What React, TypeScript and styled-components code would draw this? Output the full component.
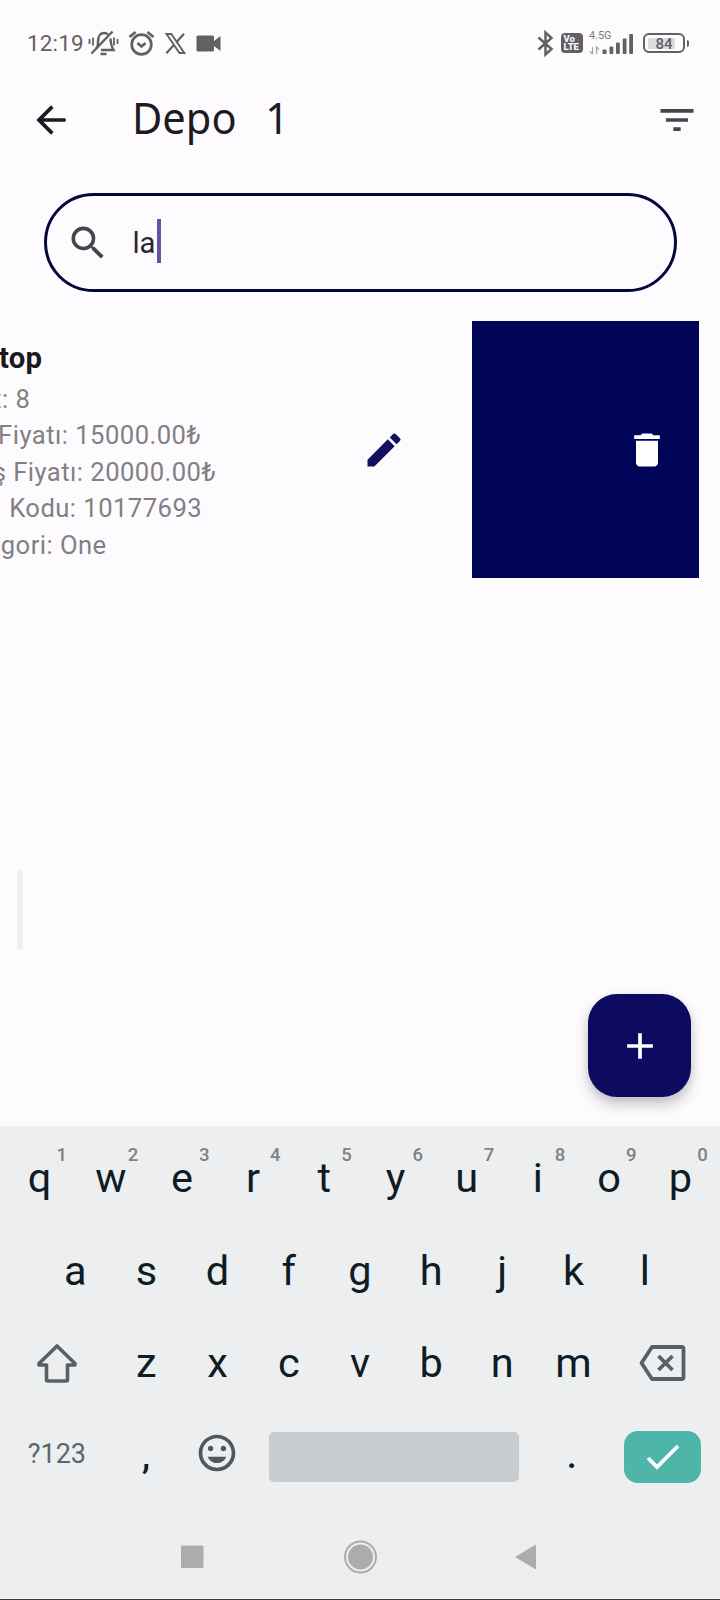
import React from "react";
import styled, { createGlobalStyle } from "styled-components";
import {
  MdAdd,
  MdArrowBack,
  MdDelete,
  MdEdit,
  MdFilterList,
  MdInsertEmoticon,
  MdSearch,
} from "react-icons/md";

const GlobalStyle = createGlobalStyle`
  * { box-sizing: border-box; }
  body {
    margin: 0;
    background: #fefbff;
    font-family: Roboto, "Liberation Sans", sans-serif;
  }
  svg { display: block; flex: none; }
`;

const Screen = styled.div`
  width: 720px;
  height: 1600px;
  display: flex;
  flex-direction: column;
  overflow: hidden;
  background: #fefbff;
`;

/* Status bar */

const StatusBar = styled.header`
  height: 86px;
  padding: 0 31px 0 27px;
  display: flex;
  align-items: center;
  justify-content: space-between;
  color: #636064;
`;

const StatusGroup = styled.div`
  display: flex;
  align-items: center;
`;

const Clock = styled.span`
  width: 61px;
  font-size: 22.4px;
  line-height: 30px;
  letter-spacing: 0.2px;
`;

const VolteBadge = styled.div`
  width: 22.5px;
  height: 20.5px;
  margin-left: 7px;
  border-radius: 4px;
  background: #636064;
  color: #fefbff;
  font-size: 9.5px;
  line-height: 8.5px;
  font-weight: 800;
  padding: 2px 0 0 3px;
`;

const Signal = styled.div`
  margin-left: 6px;
  width: 46px;
  height: 24px;
  display: grid;
  grid-template: 24px / 46px;
`;

const NetworkType = styled.span`
  grid-area: 1 / 1;
  font-size: 10.8px;
  line-height: 10px;
  color: #7b787c;
`;

const SignalBars = styled.svg`
  grid-area: 1 / 1;
`;

const Battery = styled.div`
  display: flex;
  align-items: center;
  margin-left: 8px;
`;

const BatteryCell = styled.div`
  width: 42px;
  height: 20px;
  border: 2.2px solid #636064;
  border-radius: 6px;
  padding: 2.5px;
  display: flex;
`;

const BatteryFill = styled.div`
  flex: 1;
  background: linear-gradient(90deg, #dedbdf 82%, transparent 82%);
  border-radius: 2px;
  font-size: 15px;
  font-weight: 500;
  line-height: 12px;
  text-align: center;
`;

const BatteryTip = styled.div`
  width: 2.5px;
  height: 7px;
  margin-left: 1.5px;
  background: #636064;
  border-radius: 0 2px 2px 0;
`;

/* App bar and search */

const AppBar = styled.div`
  height: 68px;
  padding: 0 21.5px 0 28.5px;
  display: flex;
  align-items: center;
  color: #1d1b1f;
`;

const Title = styled.h1`
  flex: 1;
  margin: -6px 0 0 59px;
  font: 400 44px/60px "Noto Sans", sans-serif;
  word-spacing: 19px;
  transform: scaleX(0.945);
  transform-origin: left center;
`;

const SearchField = styled.div`
  width: 633px;
  height: 99px;
  margin: 39px 0 0 44px;
  padding-left: 18.5px;
  display: flex;
  align-items: center;
  border: 3.6px solid #04063f;
  border-radius: 50px;
  color: #47454a;
`;

const Query = styled.span`
  margin-left: 23px;
  font-size: 29.3px;
  line-height: 44px;
  color: #2a282c;
`;

const Caret = styled.span`
  width: 3.6px;
  height: 44px;
  margin-left: 1.5px;
  margin-top: -3px;
  background: #6653a6;
`;

/* Swiped product row */

const ProductRow = styled.section`
  height: 257px;
  margin: 29px 21.5px 0 0;
  display: flex;
`;

const ProductTile = styled.div`
  flex: 1;
  min-width: 0;
  display: flex;
  align-items: center;
  justify-content: space-between;
  padding-right: 66px;
  color: #12105f;
`;

const ProductInfo = styled.div`
  margin-left: -53px;
  white-space: nowrap;
`;

const ProductName = styled.div`
  font-size: 29.3px;
  line-height: 44px;
  font-weight: 700;
  letter-spacing: 0.3px;
  padding-left: 3px;
  color: #1b191d;
`;

const ProductLine = styled.div`
  position: relative;
  top: 0.6px;
  font-size: 25.6px;
  line-height: 36.6px;
  letter-spacing: 0.46px;
  color: #828084;
`;

const Lead = styled.span`
  margin: 0 4px 0 -4px;
`;

const DeleteAction = styled.div`
  width: 226.5px;
  background: #000457;
  color: #fff;
  display: flex;
  align-items: center;
  justify-content: flex-end;
  padding-right: 29.5px;
`;

const Body = styled.main`
  flex: 1;
  display: flex;
  justify-content: space-between;
  align-items: flex-end;
  padding: 0 28.6px 28.6px 17px;
`;

const EdgeHandle = styled.div`
  width: 6px;
  height: 80px;
  margin-bottom: 147px;
  border-radius: 3px;
  background: #f1eef2;
`;

const Fab = styled.div`
  width: 103px;
  height: 103px;
  border-radius: 29px;
  background: #0d0b60;
  color: #fff;
  display: flex;
  align-items: center;
  justify-content: center;
  box-shadow: 0 8px 14px rgba(0, 0, 0, 0.2), 0 2px 8px rgba(0, 0, 0, 0.08);
`;

/* Keyboard */

const Keyboard = styled.div`
  height: 474px;
  padding-top: 6.4px;
  background: #eceef0;
  border-bottom: 1px solid #3a3c3e;
`;

const KeyRow = styled.div<{ $inset?: number }>`
  display: flex;
  height: 92.3px;
  padding: 0 ${(p) => 4 + (p.$inset ?? 0)}px;
`;

const Key = styled.div`
  position: relative;
  width: 71.2px;
  font-size: 41.5px;
  line-height: 92.3px;
  text-align: center;
  color: #0e1c24;
`;

const KeyHint = styled.span`
  position: absolute;
  left: 52.5px;
  top: 11.6px;
  font-size: 18.5px;
  line-height: 22px;
  font-weight: 500;
  color: #7d8285;
`;

const WideKey = styled.div`
  width: 106.8px;
  display: flex;
  align-items: center;
  justify-content: center;
  color: #566066;
`;

const BottomRow = styled.div`
  display: flex;
  align-items: center;
  height: 97px;
  padding: 0 18.7px 0 3.5px;
  color: #4d595f;
`;

const SymbolsKey = styled.div`
  width: 107px;
  text-align: center;
  font-size: 27px;
  font-weight: 450;
  color: #5c676c;
  margin-top: -7px;
`;

const Punctuation = styled.div<{ $width: number }>`
  width: ${(p) => p.$width}px;
  text-align: center;
  font-size: 36px;
  font-weight: 500;
  line-height: 36px;
  margin-top: -3px;
  color: #0e1c24;
`;

const EmojiKey = styled.div`
  width: 87.5px;
  padding-left: 12.5px;
  margin-top: -9px;
`;

const Space = styled.div`
  width: 250.7px;
  height: 50px;
  margin-top: -1px;
  border-radius: 5px;
  background: #c9cdd0;
`;

const EnterKey = styled.div`
  width: 77.3px;
  height: 52px;
  margin-top: -1px;
  border-radius: 14px;
  background: #4db6a9;
  display: flex;
  align-items: center;
  justify-content: center;
`;

const NavBar = styled.nav`
  height: 93.5px;
  display: flex;
  align-items: center;
  padding: 8px 0 0 181px;
`;

const hinted = [..."qwertyuiop"];
const homeRow = [..."asdfghjkl"];
const lowerRow = [..."zxcvbnm"];

export default function App() {
  return (
    <>
      <GlobalStyle />
      <Screen>
        <StatusBar>
          <StatusGroup>
            <Clock>12:19</Clock>
            <svg width="31" height="28" viewBox="0 0 31 28" fill="none" stroke="currentColor" strokeWidth="2.4">
              <path d="M8 20c2-2 2-4 2-7.500 0-4.500 2-8.500 6-8.500 1.500 0 3 .5 4 1.500M22.500 9.500c.3 5 .5 7.500 3 11.500H13" />
              <path d="M12.500 25h6M3.500 24.500 24.500 2.500" />
              <path d="M1.500 10v5M5 8.500v8M26 8.500v8M29.500 10v5" strokeWidth="1.800" />
            </svg>
            <svg width="27" height="27" viewBox="0 0 27 27" fill="none" stroke="currentColor" strokeWidth="2.700" style={{ marginLeft: 9 }}>
              <circle cx="13.500" cy="14.500" r="9.800" />
              <path d="M1.500 7 7.500 2M19.500 2l6 5M9.500 13l4 3.500 4-3.500" />
            </svg>
            <svg width="21" height="21" viewBox="0 0 21 21" fill="none" stroke="currentColor" strokeWidth="1.900" style={{ marginLeft: 10 }}>
              <path d="M1.500 1h4.800l13 19h-4.800z" />
              <path d="m19 .8-7.800 8.600M9.200 11.700 1.300 20.200" strokeWidth="2.200" />
            </svg>
            <svg width="25" height="17" viewBox="0 0 25 17" fill="currentColor" style={{ marginLeft: 9.500 }}>
              <path d="M2 .5h14.500a1.500 1.500 0 0 1 1.500 1.500v4l6.500-5v15L18 11v4a1.500 1.500 0 0 1-1.500 1.500H2A1.500 1.500 0 0 1 .5 15V2A1.500 1.500 0 0 1 2 .5z" />
            </svg>
          </StatusGroup>
          <StatusGroup>
            <svg width="17" height="27" viewBox="0 0 17 27" fill="none" stroke="currentColor" strokeWidth="2.500">
              <path d="M1.500 7.500 14.500 19 8.500 24.500v-22L14.500 8 1.500 19.500" />
            </svg>
            <VolteBadge>
              Vo
              <br />
              LTE
            </VolteBadge>
            <Signal>
              <NetworkType>4.5G</NetworkType>
              <SignalBars width="46" height="24" viewBox="0 0 46 24" fill="currentColor">
                <rect x="13.500" y="18.500" width="4" height="4.500" rx="1" />
                <rect x="20.500" y="15.500" width="3.800" height="7.500" rx="1" />
                <rect x="27" y="11.500" width="3.800" height="11.500" rx="1" />
                <rect x="33.700" y="7.500" width="3.800" height="15.500" rx="1" />
                <rect x="40.200" y="3" width="3.800" height="20" rx="1" />
                <path d="M3.500 16v7M1 20.500l2.500 2.500M7.500 23v-7l2.500 2.500" fill="none" stroke="#a5a2a6" strokeWidth="1.200" />
              </SignalBars>
            </Signal>
            <Battery>
              <BatteryCell>
                <BatteryFill>84</BatteryFill>
              </BatteryCell>
              <BatteryTip />
            </Battery>
          </StatusGroup>
        </StatusBar>

        <AppBar>
          <MdArrowBack size={44} />
          <Title>Depo 1</Title>
          <MdFilterList size={44} color="#47454a" />
        </AppBar>

        <SearchField>
          <MdSearch size={44} />
          <Query>la</Query>
          <Caret />
        </SearchField>

        <ProductRow>
          <ProductTile>
            <ProductInfo>
              <ProductName>Laptop</ProductName>
              <ProductLine>Adet: 8</ProductLine>
              <ProductLine>Alış Fiyatı: 15000.00₺</ProductLine>
              <ProductLine>Satış Fiyatı: 20000.00₺</ProductLine>
              <ProductLine>
                <Lead>Ürün</Lead> Kodu: 10177693
              </ProductLine>
              <ProductLine>Kategori: One</ProductLine>
            </ProductInfo>
            <MdEdit size={44} />
          </ProductTile>
          <DeleteAction>
            <MdDelete size={44} />
          </DeleteAction>
        </ProductRow>

        <Body>
          <EdgeHandle />
          <Fab>
            <MdAdd size={44} />
          </Fab>
        </Body>

        <Keyboard>
          <KeyRow>
            {hinted.map((letter, i) => (
              <Key key={letter}>
                {letter}
                <KeyHint>{(i + 1) % 10}</KeyHint>
              </Key>
            ))}
          </KeyRow>
          <KeyRow $inset={35.6}>
            {homeRow.map((letter) => (
              <Key key={letter}>{letter}</Key>
            ))}
          </KeyRow>
          <KeyRow>
            <WideKey>
              <svg width="42" height="40" viewBox="0 0 42 40" fill="none" stroke="currentColor" strokeWidth="3.600" strokeLinejoin="round">
                <path d="M21 3 39 20.500V22h-7.500v14.500a1.500 1.500 0 0 1-1.500 1.500H12a1.500 1.500 0 0 1-1.500-1.500V22H3v-1.500z" />
              </svg>
            </WideKey>
            {lowerRow.map((letter) => (
              <Key key={letter}>{letter}</Key>
            ))}
            <WideKey>
              <svg width="48" height="38" viewBox="0 0 48 38" fill="none" stroke="currentColor" strokeWidth="3.800" strokeLinejoin="round">
                <path d="M13 3h29.500a2 2 0 0 1 2 2v28a2 2 0 0 1-2 2H13L2.500 19z" />
                <path d="m19.500 12 14 14m0-14-14 14" />
              </svg>
            </WideKey>
          </KeyRow>
          <BottomRow>
            <SymbolsKey>?123</SymbolsKey>
            <Punctuation $width={72}>,</Punctuation>
            <EmojiKey>
              <MdInsertEmoticon size={44} />
            </EmojiKey>
            <Space />
            <Punctuation $width={105}>.</Punctuation>
            <EnterKey>
              <svg width="34" height="26" viewBox="0 0 34 26" fill="none" stroke="#fff" strokeWidth="3.800">
                <path d="m2 14 9 9L32 2" />
              </svg>
            </EnterKey>
          </BottomRow>
          <NavBar>
            <svg width="355" height="34" viewBox="0 0 355 34" fill="#acacac">
              <rect y="5.500" width="22.500" height="22.500" rx="1" />
              <circle cx="179.500" cy="17" r="15.500" fill="none" stroke="#acacac" strokeWidth="2" />
              <circle cx="179.500" cy="17" r="12.500" />
              <path d="M334 17 355 4.500v25z" />
            </svg>
          </NavBar>
        </Keyboard>
      </Screen>
    </>
  );
}
